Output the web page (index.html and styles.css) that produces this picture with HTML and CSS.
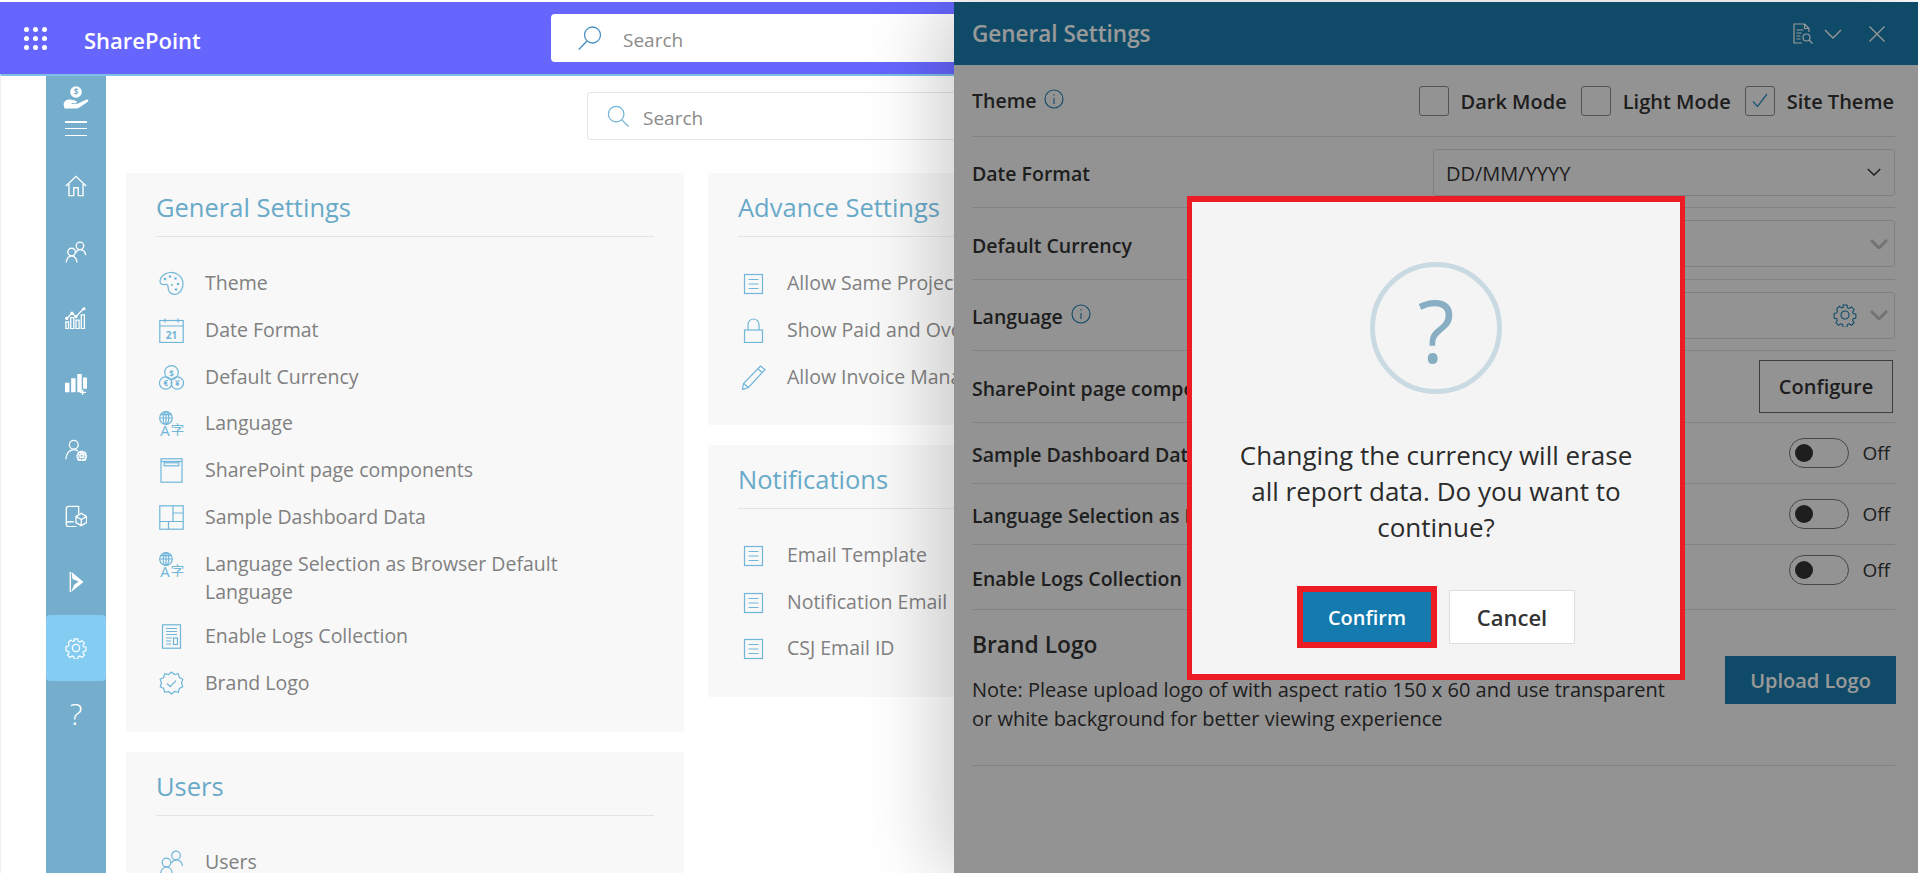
FILE: index.html
```html
<!DOCTYPE html>
<html lang="en">
<head>
<meta charset="utf-8">
<title>General Settings</title>
<link rel="stylesheet" href="styles.css">
</head>
<body>
<svg class="defs" width="0" height="0" aria-hidden="true">
  <defs>
    <symbol id="i-users" viewBox="0 0 25 25"><circle cx="17" cy="5.500" r="4.300"/><path d="M12.500 13c1-2 2.500-3.200 4.500-3.200 3.500 0 6 2.500 6.500 6.200"/><circle cx="7.500" cy="12.500" r="4.300"/><path d="M1.500 24.500c0-4 2.500-7.500 6-7.500s6 3.500 6 7.500"/></symbol>
    <symbol id="i-palette" viewBox="0 0 25 25"><path d="M11 1.500C5 2 1 6 1 10.500c0 3 3 3.500 5 3 2-.5 3 .5 3 2 0 2 0 4 2 6 2 2 5 2.500 8 1 3-2 5-6 5-10C24 6 18 1 11 1.500z"/><circle class="solid" cx="6" cy="8" r="1.300"/><circle class="solid" cx="11" cy="5.500" r="1.300"/><circle class="solid" cx="16.500" cy="7.500" r="1.300"/><circle class="solid" cx="19" cy="13" r="1.300"/><circle class="solid" cx="17" cy="18.500" r="1.300"/><circle class="solid" cx="13" cy="14" r="1"/></symbol>
    <symbol id="i-date" viewBox="0 0 25 25"><rect x=".8" y="2.500" width="23.400" height="22"/><path d="M.8 8h23.400M6 .5v4M19 .5v4"/><text x="12.500" y="21" class="cal-num">21</text></symbol>
    <symbol id="i-currency" viewBox="0 0 25 25"><circle cx="12.500" cy="7.500" r="6.800"/><circle cx="6.700" cy="18" r="6.200"/><circle cx="18.300" cy="18" r="6.200"/><text x="12.500" y="11.500" class="coin">$</text><text x="6.700" y="21" class="coin">€</text><text x="18.300" y="21" class="coin">¥</text></symbol>
    <symbol id="i-lang" viewBox="0 0 25 25"><circle cx="7" cy="7" r="6.300"/><ellipse cx="7" cy="7" rx="2.800" ry="6.300"/><path d="M.7 7h12.600M7 .7v12.600M1.800 3.600h10.400"/><text x="6" y="25" class="lang-a">A</text><text x="18.500" y="24" class="lang-z">字</text></symbol>
    <symbol id="i-page" viewBox="0 0 25 25"><rect x="2" y=".8" width="21" height="23.400"/><path d="M2 3.500h21"/><rect x="5.200" y="4.800" width="14.600" height="3"/></symbol>
    <symbol id="i-dash" viewBox="0 0 25 25"><rect x=".8" y=".8" width="23.400" height="23.400"/><path d="M14 .8v15.700M14 8h10.200M.8 16.500h23.400M9.500 16.500v7.700"/></symbol>
    <symbol id="i-logs" viewBox="0 0 25 25"><rect x="3.500" y=".8" width="18" height="23.400"/><path d="M7 4.500h11M7 7.500h11M7 10.500h11M7 14h6M7 17h5M7 20h5"/><rect x="14.500" y="14" width="4" height="6.500"/></symbol>
    <symbol id="i-brand" viewBox="0 0 25 25"><path d="M12.500 1l3 2.500 3.800-.8 1 3.800 3.500 1.800-1.300 3.700 1.300 3.700-3.500 1.800-1 3.800-3.800-.8-3 2.500-3-2.500-3.800.8-1-3.800L1.200 15.700l1.300-3.700-1.300-3.700L4.700 6.500l1-3.800 3.800.8z"/><path d="M8 12.500l3.200 3.200 5.800-6"/></symbol>
    <symbol id="i-doc" viewBox="0 0 25 25"><rect x="3.500" y="3.500" width="18" height="19"/><path d="M7.500 8.500h10M7.500 13h10M7.500 17.500h10"/></symbol>
    <symbol id="i-lock" viewBox="0 0 25 25"><rect x="3.500" y="12" width="18" height="12.500"/><path d="M7 12V6.500a5.500 5.500 0 0 1 11 0V12"/></symbol>
    <symbol id="i-pencil" viewBox="0 0 25 25"><path d="M19.500 1l4.500 3.500L7.500 22.500l-6 2 1-6zM17 4l4.500 3.500M2.500 18.500l5 4"/></symbol>
    <symbol id="i-gear" viewBox="0 0 25 25"><path d="M10.300 1h4.400l.7 3.200 1.900.8 2.800-1.800 3 3-1.800 2.800.8 1.900 3 .7v4.400l-3 .7-.8 1.900 1.800 2.800-3 3-2.800-1.800-1.900.8-.7 3.200h-4.400l-.7-3.200-1.900-.8-2.800 1.800-3-3 1.800-2.800-.8-1.900-3-.7V10.800l3-.7.8-1.900L2.900 5.400l3-3 2.800 1.800 1.900-.8z" transform="translate(1.250 1.250) scale(.9)"/><circle cx="12.500" cy="12.500" r="4.200"/></symbol>
    <symbol id="i-search" viewBox="0 0 24 24"><circle cx="10" cy="10" r="8.500"/><path d="M16.200 16.200 23.500 23.500"/></symbol>
    <symbol id="i-chev" viewBox="0 0 18 10"><path d="M1 1l8 8 8-8"/></symbol>
    <symbol id="i-info" viewBox="0 0 20 20"><circle cx="10" cy="10" r="9"/><path d="M10 9v6"/><path d="M10 5.200v1.400"/></symbol>
  </defs>
</svg>

<div class="app">
  <header class="topbar">
    <svg class="waffle" viewBox="0 0 23 23"><g>
      <circle cx="2.500" cy="2.500" r="2.500"/><circle cx="11.500" cy="2.500" r="2.500"/><circle cx="20.500" cy="2.500" r="2.500"/>
      <circle cx="2.500" cy="11.500" r="2.500"/><circle cx="11.500" cy="11.500" r="2.500"/><circle cx="20.500" cy="11.500" r="2.500"/>
      <circle cx="2.500" cy="20.500" r="2.500"/><circle cx="11.500" cy="20.500" r="2.500"/><circle cx="20.500" cy="20.500" r="2.500"/>
    </g></svg>
    <span class="brand">SharePoint</span>
    <div class="top-search">
      <svg class="top-search-icon" viewBox="0 0 24 24"><circle cx="14.500" cy="9" r="8"/><path d="M9 15 .8 23.500"/></svg>
      <span>Search</span>
    </div>
  </header>

  <div class="body">
    <nav class="rail">
      <svg class="rail-logo" viewBox="0 0 26 24">
        <circle class="solid" cx="13" cy="6" r="5.800"/>
        <text x="13" y="9.200" class="dollar">$</text>
        <path class="solid" d="M.5 18c1-4 4-5 7-4.500l5 1.200c2 .5 1.500 2.300 0 2.300h-4v.8h6l8.500-4c2-.8 3 .8 1.800 2l-8 5.500c-1.500 1-3 1.200-4.500 1.200H1.500z"/>
      </svg>
      <div class="burger"><i></i><i></i><i></i></div>
      <ul class="rail-list">
        <li class="rail-item"><svg viewBox="0 0 25 25"><path d="M1 12.500 12.500 1.500 24 12.500M4.500 10v13.500h5.500v-9h5v9h5.500V10"/></svg></li>
        <li class="rail-item"><svg><use href="#i-users"/></svg></li>
        <li class="rail-item"><svg viewBox="0 0 25 25"><path d="M1 14 8 7l4.500 4 9-9.500"/><circle class="solid" cx="8" cy="7" r="1.800"/><circle class="solid" cx="12.500" cy="11" r="1.800"/><circle class="solid" cx="21.500" cy="2" r="1.800"/><circle class="solid" cx="2" cy="13" r="1.800"/><path d="M1 17h3v7.500H1zM6.500 12h3.500v12.500H6.500zM12.500 15h3.500v9.500h-3.500zM18.500 9H22v15.500h-3.500z"/></svg></li>
        <li class="rail-item"><svg viewBox="0 0 25 25"><path class="solid" d="M0 11h5v11H0zM7 6h5v16H7zM14 1h5v21h-5zM20.500 5H25v13h-4.500z"/><path d="M20 19v6M17 22h7"/></svg></li>
        <li class="rail-item"><svg viewBox="0 0 25 25"><circle cx="10" cy="6.500" r="5"/><path d="M1 23c0-6 4-11 9-11 2 0 3.500.7 4.500 1.500"/><use class="mini-gear" href="#i-gear" x="13" y="13" width="12" height="12"/></svg></li>
        <li class="rail-item"><svg viewBox="0 0 25 25"><path d="M15.500 10V1.500H4c-1.800 0-2.500 1-2.500 2.500v18c0 1.500.7 2.500 2.500 2.500h9M1.500 20.500c.5-1 1.500-1.500 2.500-1.500h6"/><path d="M18.500 9.500l6 3.500v7l-6 3.500-6-3.500v-7zM12.500 13l6 3.500 6-3.500M18.500 16.500v7"/></svg></li>
        <li class="rail-item"><svg viewBox="0 0 25 25"><path class="solid" d="M7.500 1 21 12.500 7 24l3.500-8.500 5-3.500-7-3z"/><path d="M6 1v23"/></svg></li>
        <li class="rail-item rail-active"><svg><use href="#i-gear"/></svg></li>
        <li class="rail-item"><span class="rail-q">?</span></li>
      </ul>
    </nav>

    <main class="main">
      <div class="page-search">
        <svg class="page-search-icon"><use href="#i-search"/></svg>
        <span>Search</span>
      </div>
      <div class="columns">
        <div class="column">
          <section class="card">
            <h2 class="card-title">General Settings</h2>
            <ul class="list">
              <li class="row"><svg class="ic"><use href="#i-palette"/></svg><span>Theme</span></li>
              <li class="row"><svg class="ic"><use href="#i-date"/></svg><span>Date Format</span></li>
              <li class="row"><svg class="ic"><use href="#i-currency"/></svg><span>Default Currency</span></li>
              <li class="row"><svg class="ic"><use href="#i-lang"/></svg><span>Language</span></li>
              <li class="row"><svg class="ic"><use href="#i-page"/></svg><span>SharePoint page components</span></li>
              <li class="row"><svg class="ic"><use href="#i-dash"/></svg><span>Sample Dashboard Data</span></li>
              <li class="row row-wrap"><svg class="ic"><use href="#i-lang"/></svg><span>Language Selection as Browser Default Language</span></li>
              <li class="row"><svg class="ic"><use href="#i-logs"/></svg><span>Enable Logs Collection</span></li>
              <li class="row"><svg class="ic"><use href="#i-brand"/></svg><span>Brand Logo</span></li>
            </ul>
          </section>
          <section class="card">
            <h2 class="card-title">Users</h2>
            <ul class="list">
              <li class="row"><svg class="ic"><use href="#i-users"/></svg><span>Users</span></li>
            </ul>
          </section>
        </div>
        <div class="column">
          <section class="card">
            <h2 class="card-title">Advance Settings</h2>
            <ul class="list">
              <li class="row"><svg class="ic"><use href="#i-doc"/></svg><span>Allow Same Project Name</span></li>
              <li class="row"><svg class="ic"><use href="#i-lock"/></svg><span>Show Paid and Overdue</span></li>
              <li class="row"><svg class="ic"><use href="#i-pencil"/></svg><span>Allow Invoice Management</span></li>
            </ul>
          </section>
          <section class="card">
            <h2 class="card-title">Notifications</h2>
            <ul class="list">
              <li class="row"><svg class="ic"><use href="#i-doc"/></svg><span>Email Template</span></li>
              <li class="row"><svg class="ic"><use href="#i-doc"/></svg><span>Notification Email</span></li>
              <li class="row"><svg class="ic"><use href="#i-doc"/></svg><span>CSJ Email ID</span></li>
            </ul>
          </section>
        </div>
      </div>
    </main>
  </div>

  <aside class="panel">
    <div class="panel-head">
      <span class="panel-title">General Settings</span>
      <div class="panel-tools">
        <svg class="tool-doc" viewBox="0 0 21 21"><path d="M12.500 1H2v19h8M12.500 1 17 5.500V9M12.500 1v4.500H17M4.500 7h7M4.500 10h5M4.500 13h4M4.500 16h4"/><circle cx="14.500" cy="14.500" r="3.500"/><path d="M17 17l3.500 3.500"/></svg>
        <svg class="tool-chev"><use href="#i-chev"/></svg>
        <svg class="tool-x" viewBox="0 0 16 16"><path d="M.5.500l15 15M15.500.500l-15 15"/></svg>
      </div>
    </div>
    <div class="panel-body">
      <div class="setting h-71">
        <span class="label label-theme">Theme<svg class="info"><use href="#i-info"/></svg></span>
        <div class="checks">
          <label class="check"><i class="box"></i>Dark Mode</label>
          <label class="check"><i class="box"></i>Light Mode</label>
          <label class="check"><i class="box"><svg viewBox="0 0 16 16"><path d="M1 8.500l4.500 5L15 1"/></svg></i>Site Theme</label>
        </div>
      </div>
      <div class="setting h-71">
        <span class="label">Date Format</span>
        <div class="select"><span>DD/MM/YYYY</span><svg class="chev-thin"><use href="#i-chev"/></svg></div>
      </div>
      <div class="setting h-72">
        <span class="label">Default Currency</span>
        <div class="select"><svg class="chev-bold"><use href="#i-chev"/></svg></div>
      </div>
      <div class="setting h-71">
        <span class="label">Language<svg class="info info-lang"><use href="#i-info"/></svg></span>
        <div class="select"><svg class="sel-gear"><use href="#i-gear"/></svg><svg class="chev-bold"><use href="#i-chev"/></svg></div>
      </div>
      <div class="setting h-72">
        <span class="label">SharePoint page components</span>
        <button class="btn-outline">Configure</button>
      </div>
      <div class="setting h-61">
        <span class="label">Sample Dashboard Data</span>
        <div class="toggle"><i class="switch"></i><span>Off</span></div>
      </div>
      <div class="setting h-61">
        <span class="label">Language Selection as Browser Default Language</span>
        <div class="toggle"><i class="switch"></i><span>Off</span></div>
      </div>
      <div class="setting h-65">
        <span class="label">Enable Logs Collection</span>
        <div class="toggle toggle-raised"><i class="switch"></i><span>Off</span></div>
      </div>
      <div class="setting brand-row">
        <div class="brand-copy">
          <h3 class="brand-title">Brand Logo</h3>
          <p class="brand-note">Note: Please upload logo of with aspect ratio 150 x 60 and use transparent or white background for better viewing experience</p>
        </div>
        <button class="btn-upload">Upload Logo</button>
      </div>
    </div>
    <div class="scrim"></div>
  </aside>

  <div class="dialog">
    <div class="q-ring">?</div>
    <p class="dialog-msg">Changing the currency will erase all report data. Do you want to continue?</p>
    <div class="dialog-actions">
      <button class="btn-confirm">Confirm</button>
      <button class="btn-cancel">Cancel</button>
    </div>
  </div>
</div>
</body>
</html>
```

FILE: styles.css
```css
* { box-sizing: border-box; }
html, body { margin: 0; height: 100%; overflow: hidden; background: #fff; }
body { font-family: "Open Sans", "Noto Sans", sans-serif; }
ul { list-style: none; margin: 0; padding: 0; }
h2, h3, p { margin: 0; }
button { font-family: inherit; cursor: pointer; }
.defs { position: absolute; }
svg { fill: none; stroke: currentColor; display: block; }
.solid { fill: currentColor; stroke: none; }
.app { position: relative; width: 1918px; height: 873px; overflow: hidden; padding-top: 2px; }

/* top bar */
.topbar { height: 72px; background: #6666ff; display: flex; align-items: center; color: #fff; }
.waffle { width: 23px; height: 23px; margin-left: 24px; fill: #fff; stroke: none; }
.brand { margin-left: 37px; width: 467px; padding-top: 3px; font-size: 22px; font-weight: 600; }
.top-search { width: 500px; height: 48px; background: #fff; border-radius: 4px; display: flex; align-items: center; padding-left: 27px; color: #8a8a8a; font-size: 19px; }
.top-search span { padding-top: 3px; }
.top-search-icon { width: 24px; height: 24px; color: #4a90c2; margin-right: 21px; stroke-width: 1.300; }

.body { display: flex; height: 799px; border-top: 2px solid #7fc0e4; border-left: 1px solid #eee; }
.rail { width: 60px; margin-left: 45px; background: #75aecd; color: #fff; flex: none; display: flex; flex-direction: column; align-items: center; }
.rail-logo { width: 26px; height: 24px; margin-top: 10px; }
.dollar { font-size: 8px; font-weight: 700; fill: #75aecd; stroke: none; text-anchor: middle; font-family: "Open Sans", sans-serif; }
.burger { width: 22px; margin-top: 11px; display: flex; flex-direction: column; gap: 5.250px; }
.burger i { display: block; height: 1.500px; background: #fff; }
.rail-list { width: 60px; margin-top: 17px; }
.rail-item { height: 66px; display: flex; align-items: center; justify-content: center; }
.rail-item svg { width: 22px; height: 22px; stroke-width: 1.500; }
.rail-active { background: #84ccf2; border-radius: 4px; }
.rail-q { font-size: 30px; font-weight: 300; line-height: 1; }
.mini-gear { stroke-width: 4; }

/* main page */
.main { flex: 1; padding-left: 20px; min-width: 0; }
.page-search { width: 600px; height: 48px; margin: 16px 0 33px 461px; border: 1px solid #e6e6e6; border-radius: 3px; display: flex; align-items: center; padding-left: 19px; color: #8a8a8a; font-size: 19px; }
.page-search span { padding-top: 3px; }
.page-search-icon { width: 22px; height: 22px; color: #6fb3d6; margin-right: 14px; stroke-width: 1.300; }
.columns { display: flex; gap: 24px; align-items: flex-start; }
.column { width: 558px; display: flex; flex-direction: column; gap: 19.600px; }
.card { background: #f8f8f8; padding: 0 30px 25.400px; }
.card-title { height: 64px; padding-top: 17px; border-bottom: 1px solid #e4e4e4; color: #69aac9; font-size: 25.500px; line-height: 34px; font-weight: 400; white-space: nowrap; }
.list { padding-top: 22.600px; }
.row { display: flex; align-items: flex-start; padding: 9.400px 0; font-size: 19.500px; line-height: 28px; color: #808080; white-space: nowrap; }
.row-wrap { padding-bottom: 7.400px; white-space: normal; }
.row-wrap span { width: 380px; }
.ic { width: 25px; height: 25px; flex: none; margin: 2px 21px 0 3px; color: #6fb6d9; stroke-width: 1.200; }
.cal-num { font-size: 10px; font-weight: 700; fill: currentColor; stroke: none; text-anchor: middle; font-family: "Open Sans", sans-serif; }
.coin { font-size: 8px; font-weight: 700; fill: currentColor; stroke: none; text-anchor: middle; font-family: "Open Sans", sans-serif; }
.lang-a { font-size: 15px; fill: currentColor; stroke: none; text-anchor: middle; font-family: "Open Sans", sans-serif; }
.lang-z { font-size: 13.500px; fill: currentColor; stroke: none; text-anchor: middle; font-family: "Noto Sans CJK SC", sans-serif; }

/* side panel */
.panel { position: absolute; left: 954px; top: 2px; width: 964px; height: 871px; background: #f6f6f6; box-shadow: -16px 0 70px rgba(0,0,0,.2); }
.panel-head { height: 63px; background: #1a7cad; color: #fff; display: flex; align-items: center; justify-content: space-between; padding: 0 33px 0 18px; }
.panel-title { font-size: 22.500px; font-weight: 600; }
.panel-tools { display: flex; align-items: center; }
.tool-doc { width: 21px; height: 21px; stroke-width: 1.200; }
.tool-chev { width: 18px; height: 10px; margin: 0 27px 0 11px; stroke-width: 1.300; }
.tool-x { width: 16px; height: 16px; stroke-width: 1.300; }
.panel-body { padding: 1px 23px 0 18px; color: #333; }
.setting { display: flex; align-items: center; justify-content: space-between; border-bottom: 1px solid #d9d9d9; }
.h-61 { height: 61px; }
.h-65 { height: 65px; }
.h-71 { height: 71px; }
.h-72 { height: 72px; }
.label { padding-top: 3px; font-size: 19.500px; font-weight: 600; display: flex; align-items: center; white-space: nowrap; }
.label-theme { padding-top: 0; margin-top: -2px; }
.info { width: 20px; height: 20px; margin-left: 8px; color: #1a7cad; stroke-width: 1.100; position: relative; top: -1px; }
.info-lang { top: -3px; }
.checks { display: flex; gap: 14px; margin-right: 1px; }
.check { display: flex; align-items: center; gap: 12px; font-size: 20px; font-weight: 600; }
.box { width: 30px; height: 30px; border: 1px solid #8a8a8a; border-radius: 3px; display: flex; align-items: center; justify-content: center; color: #2f8fc4; }
.box svg { width: 16px; height: 16px; stroke-width: 1.300; }
.select { width: 462px; height: 47px; border: 1px solid #d4d4d4; border-radius: 3px; display: flex; align-items: center; justify-content: flex-end; padding: 0 6px 0 12px; font-size: 20px; }
.select span { margin-right: auto; padding-top: 3px; }
.chev-thin { width: 14px; height: 8px; margin-right: 7px; stroke-width: 1.800; }
.chev-bold { width: 18px; height: 10px; stroke-width: 3; color: #c0c0c0; }
.sel-gear { width: 24px; height: 24px; margin-right: 13px; color: #1a7cad; stroke-width: 1.200; }
.btn-outline { width: 134px; height: 53px; background: transparent; border: 1px solid #666; color: #333; font-size: 20px; font-weight: 600; margin-right: 2px; }
.toggle { display: flex; align-items: center; gap: 13px; font-size: 19px; margin-right: 5px; }
.toggle-raised { margin-bottom: 14px; }
.switch { width: 60px; height: 30px; border: 1px solid #777; border-radius: 15px; position: relative; display: block; }
.switch::before { content: ""; position: absolute; left: 5px; top: 5px; width: 18px; height: 18px; background: #333; border-radius: 50%; }
.brand-row { height: 156px; align-items: flex-start; }
.brand-copy { width: 700px; padding-top: 19px; }
.brand-title { font-size: 22.800px; font-weight: 600; line-height: 32px; }
.brand-note { font-size: 20px; line-height: 29px; margin-top: 13.500px; }
.btn-upload { width: 171px; height: 48px; margin: 46px -1px 0 0; background: #1a7cad; color: #fff; border: 0; font-size: 20px; font-weight: 600; }
.scrim { position: absolute; inset: 0; background: rgba(0,0,0,.4); }

/* dialog */
.dialog { position: absolute; left: 1187px; top: 196px; width: 498px; height: 484px; background: #f4f4f4; border: solid #ed1c24; border-width: 6px 5px; display: flex; flex-direction: column; align-items: center; padding-top: 60px; }
.q-ring { width: 132px; height: 132px; padding-top: 3px; border: 5px solid #c9dae2; border-radius: 50%; display: flex; align-items: center; justify-content: center; color: #87aec3; font-size: 86px; line-height: 1; }
.dialog-msg { width: 410px; margin-top: 43px; text-align: center; font-size: 26px; line-height: 36px; color: #2b2b2b; }
.dialog-actions { display: flex; align-items: center; gap: 12px; margin-top: 41px; }
.btn-confirm { width: 140px; height: 62px; border: 6px solid #ed1c24; background: #157aae; color: #fff; font-size: 20px; font-weight: 600; }
.btn-cancel { width: 126px; height: 54px; border: 1px solid #ddd; background: #fff; color: #333; font-size: 22px; font-weight: 600; }
```
